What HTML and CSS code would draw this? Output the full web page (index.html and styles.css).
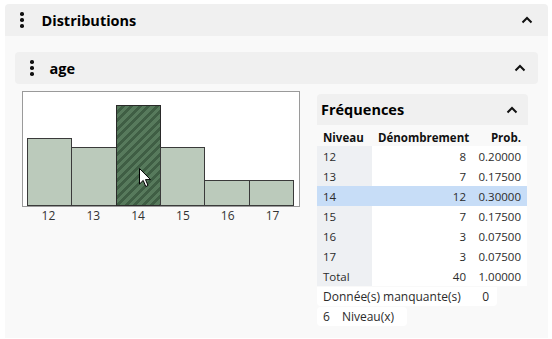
FILE: index.html
```html
<!DOCTYPE html>
<html lang="fr">
<head>
  <meta charset="UTF-8" />
  <title>Distributions</title>
  <link rel="stylesheet" href="styles.css">
</head>
<body>
  <div class="panel">
    <div class="panel-head">
      <span class="grip"><i></i><i></i><i></i></span>
      <span class="panel-title">Distributions</span>
      <svg class="chevron" width="12" height="8" viewBox="0 0 12 8"><path d="M1.5 6.5 L6 2 L10.5 6.5" fill="none" stroke="#111" stroke-width="2"/></svg>
    </div>
    <div class="panel-body">
      <div class="sub">
        <div class="sub-head">
          <span class="grip"><i></i><i></i><i></i></span>
          <span class="sub-title">age</span>
          <svg class="chevron" width="12" height="8" viewBox="0 0 12 8"><path d="M1.5 6.5 L6 2 L10.5 6.5" fill="none" stroke="#111" stroke-width="2"/></svg>
        </div>
        <div class="sub-body">
          <!-- Histogram -->
          <div class="chart-wrap">
            <div class="chart">
              <div class="bar" style="height: 68px"></div>
              <div class="bar" style="height: 59px"></div>
              <div class="bar selected" style="height: 101px"></div>
              <div class="bar" style="height: 59px"></div>
              <div class="bar" style="height: 26px"></div>
              <div class="bar" style="height: 26px"></div>
              <svg class="cursor" width="13" height="20" viewBox="0 0 13 20"><path d="M0.5 0.5 L0.5 16 L4.2 12.4 L6.8 18.5 L9 17.5 L6.5 11.6 L11.5 11.6 Z" fill="#fff" stroke="#000" stroke-width="1"/></svg>
            </div>
            <div class="axis">
              <span>12</span><span>13</span><span>14</span><span>15</span><span>16</span><span>17</span>
            </div>
          </div>

          <!-- Frequencies -->
          <div class="freq">
            <div class="freq-head">
              <span>Fréquences</span>
              <svg class="chevron" width="12" height="8" viewBox="0 0 12 8"><path d="M1.5 6.5 L6 2 L10.5 6.5" fill="none" stroke="#111" stroke-width="2"/></svg>
            </div>
            <table class="freq-table">
              <colgroup><col class="c-lvl"><col class="c-count"><col class="c-prob"></colgroup>
              <thead>
                <tr><th>Niveau</th><th class="num">Dénombrement</th><th class="num">Prob.</th></tr>
              </thead>
              <tbody>
                <tr><td class="lvl">12</td><td class="num">8</td><td class="num">0.20000</td></tr>
                <tr><td class="lvl">13</td><td class="num">7</td><td class="num">0.17500</td></tr>
                <tr class="sel"><td class="lvl">14</td><td class="num">12</td><td class="num">0.30000</td></tr>
                <tr><td class="lvl">15</td><td class="num">7</td><td class="num">0.17500</td></tr>
                <tr><td class="lvl">16</td><td class="num">3</td><td class="num">0.07500</td></tr>
                <tr><td class="lvl">17</td><td class="num">3</td><td class="num">0.07500</td></tr>
                <tr><td class="lvl">Total</td><td class="num">40</td><td class="num">1.00000</td></tr>
              </tbody>
            </table>
            <div class="note missing"><span>Donnée(s) manquante(s)</span><span>0</span></div>
            <div class="note levels"><span>6</span><span>Niveau(x)</span></div>
          </div>
        </div>
      </div>
    </div>
  </div>
</body>
</html>
```

FILE: styles.css
```css
* { box-sizing: border-box; margin: 0; padding: 0; }
body { background: #fff; color: #2b2b2b; font-family: "Open Sans", sans-serif; font-size: 12px; padding: 4px 0 0 5px; }

.panel { width: 543px; }

.panel-head {
  height: 32px;
  background: #f0f0f0;
  border-radius: 4px 4px 0 0;
  display: flex;
  align-items: center;
  padding-left: 15px;
}

.grip {
  display: flex;
  flex-direction: column;
  gap: 2.5px;
  width: 3.5px;
}

.grip i {
  display: block;
  width: 3.5px;
  height: 3.5px;
  border-radius: 50%;
  background: #111;
}

.panel-title {
  margin-left: 18px;
  font-size: 14.5px;
  font-weight: 700;
  color: #000;
}

.chevron { margin-left: auto; margin-right: 15px; }

.panel-body {
  background: #f9f9f9;
  height: 302px;
  padding: 16px 10px 0 10px;
}

.sub-head {
  height: 32px;
  background: #f0f0f0;
  border-radius: 4px;
  display: flex;
  align-items: center;
  padding-left: 15px;
}

.sub-title {
  margin-left: 16px;
  font-size: 14.5px;
  font-weight: 700;
  color: #000;
}

.sub-head .chevron { margin-right: 12px; }

.sub-body {
  display: flex;
  gap: 17px;
  padding: 7px 0 0 7px;
}

/* Histogram */
.chart-wrap { width: 278px; }

.chart {
  position: relative;
  height: 116px;
  background: #fff;
  border: 1px solid #9a9a9a;
  padding: 13px 5px 0 4px;
  display: flex;
  align-items: flex-end;
}

.bar {
  flex: 1;
  background: #bbcabb;
  border: 1px solid #3a3a3a;
  margin-left: -1px;
}

.bar:first-child { margin-left: 0; }

.bar.selected {
  background: repeating-linear-gradient(135deg, #577a5c 0 3px, #3f5e44 3px 6px);
  border-color: #2a2a2a;
}

.cursor { position: absolute; left: 116px; top: 76px; }

.axis {
  display: flex;
  padding: 1px 5px 0 4px;
  color: #333;
  line-height: 16px;
}

.axis span { flex: 1; text-align: center; }

/* Frequencies */
.freq { width: 211px; margin-top: 3px; }

.freq-head {
  height: 31px;
  background: #f0f0f0;
  border-radius: 4px 4px 0 0;
  display: flex;
  align-items: center;
  padding-left: 4px;
  font-size: 14.5px;
  font-weight: 700;
  color: #000;
}

.freq-head .chevron { margin-right: 10px; }

.freq-table {
  width: 210px;
  table-layout: fixed;
  border-collapse: collapse;
  font-size: 11.5px;
}

.c-lvl { width: 55px; }
.c-count { width: 100px; }
.c-prob { width: 55px; }

.freq-table th {
  height: 21px;
  padding: 0 6px 1px;
  vertical-align: bottom;
  text-align: left;
  font-weight: 700;
  color: #111;
  white-space: nowrap;
}

.freq-table th.num { text-align: right; }

.freq-table td {
  height: 20px;
  padding: 0 6px;
  background: #fff;
  white-space: nowrap;
}

.freq-table td.lvl { background: #eef0f3; }
.freq-table td.num { text-align: right; }
.freq-table tr.sel td { background: #c7ddf7; }

.note {
  display: flex;
  align-items: center;
  height: 19px;
  padding: 0 6px;
  background: #fff;
  border-radius: 0 0 4px 4px;
}

.note.missing {
  width: 180px;
  justify-content: space-between;
  padding-right: 8px;
  margin-top: 1px;
}

.note.levels {
  width: 90px;
  gap: 12px;
  margin-top: 1px;
  border-radius: 4px;
}
```
